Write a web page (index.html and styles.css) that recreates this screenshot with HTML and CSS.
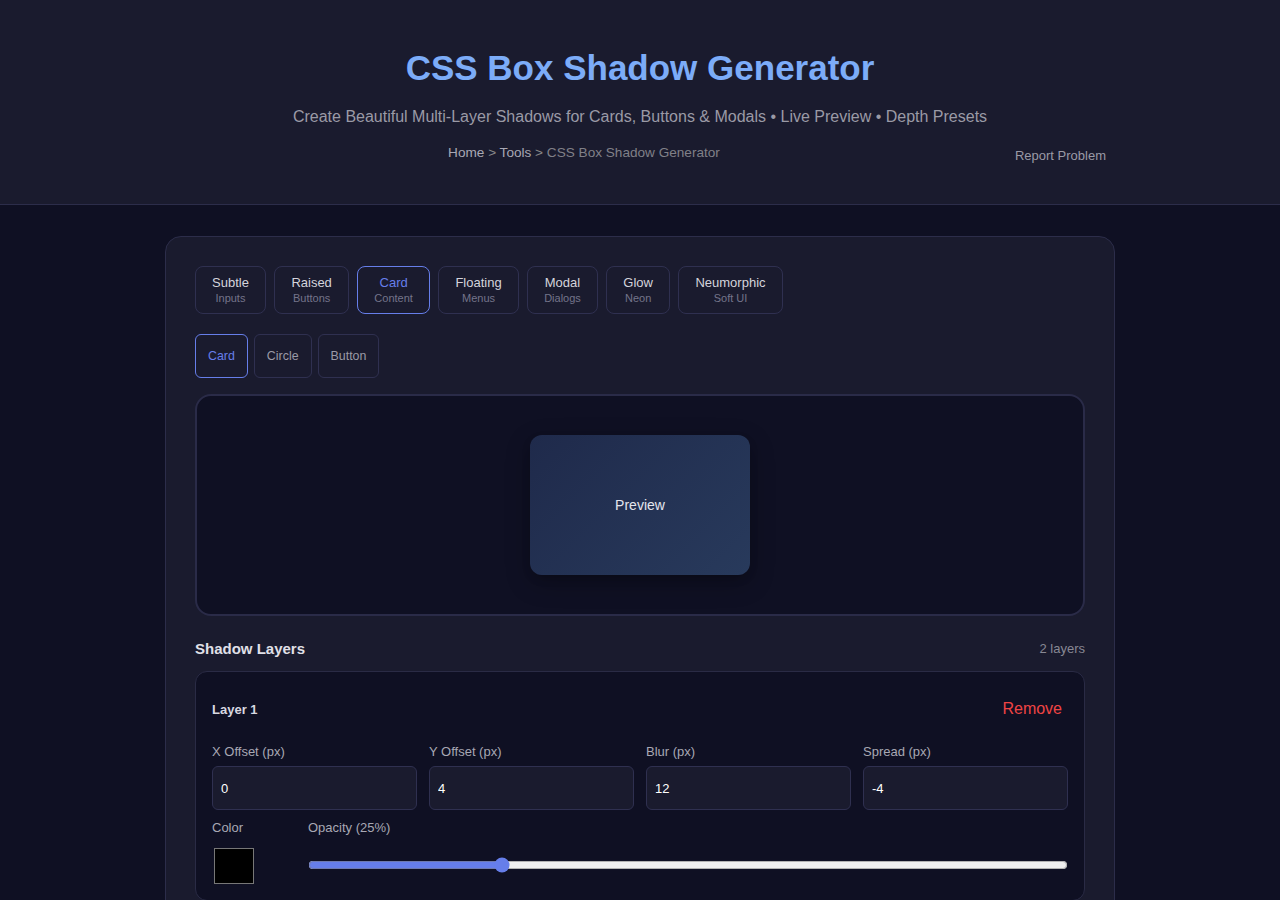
FILE: index.html
```
<html>
  <head>
    <title>CSS Box Shadow Generator</title>
    <link rel="stylesheet" href="styles.css">
  </head>
  <body>
    <div id="header">
      <h1>CSS Box Shadow Generator</h1>
      <p class="subtitle">Create Beautiful Multi-Layer Shadows for Cards, Buttons &amp; Modals • Live Preview • Depth Presets</p>
      <div class="crumbs-row">
        <div class="crumbs"><a href="#">Home</a> &gt; <a href="#">Tools</a> &gt; <span>CSS Box Shadow Generator</span></div>
        <a class="report" href="#">Report Problem</a>
      </div>
    </div>
    <div id="main">
      <div class="panel">
        <div class="presets">
          <div class="preset"><span>Subtle</span><small>Inputs</small></div>
          <div class="preset"><span>Raised</span><small>Buttons</small></div>
          <div class="preset active"><span>Card</span><small>Content</small></div>
          <div class="preset"><span>Floating</span><small>Menus</small></div>
          <div class="preset"><span>Modal</span><small>Dialogs</small></div>
          <div class="preset"><span>Glow</span><small>Neon</small></div>
          <div class="preset"><span>Neumorphic</span><small>Soft UI</small></div>
        </div>
        <div class="shapes">
          <div class="shape active">Card</div>
          <div class="shape">Circle</div>
          <div class="shape">Button</div>
        </div>
        <div class="stage">
          <div class="preview-box">Preview</div>
        </div>
        <div class="layers-head">
          <h2>Shadow Layers</h2>
          <span class="count">2 layers</span>
        </div>
        <div class="layer">
          <div class="layer-head">
            <span class="layer-name">Layer 1</span>
            <span class="remove">Remove</span>
          </div>
          <div class="fields">
            <label>X Offset (px)<input type="text" value="0"></label>
            <label>Y Offset (px)<input type="text" value="4"></label>
            <label>Blur (px)<input type="text" value="12"></label>
            <label>Spread (px)<input type="text" value="-4"></label>
          </div>
          <div class="color-row">
            <div class="color-col">
              <span class="lbl">Color</span>
              <div class="swatch"></div>
            </div>
            <div class="opacity-col">
              <span class="lbl">Opacity (25%)</span>
              <input type="range" min="0" max="100" value="25">
            </div>
          </div>
        </div>
      </div>
    </div>
  </body>
</html>
```
FILE: styles.css
```
body {
  margin: 0;
  background: #0f1023;
  font-family: "Liberation Sans", Arial, sans-serif;
  color: #e0e0e8;
}
#header {
  background: #1a1b2e;
  border-bottom: 1px solid #2c2d4a;
  text-align: center;
  padding: 46px 0 31px;
}
#header h1 {
  margin: 0;
  font-size: 35px;
  line-height: 44px;
  color: #7cacf8;
}
.subtitle {
  margin: 18px 0 0;
  font-size: 16px;
  color: #9a9aa6;
}
.crumbs-row {
  position: relative;
  margin-top: 19px;
  height: 28px;
}
.crumbs {
  font-size: 13.6px;
  color: #888;
  padding-right: 112px;
}
.crumbs a {
  color: #a8a8b4;
  text-decoration: none;
}
.crumbs span {
  color: #808088;
}
.report {
  position: absolute;
  right: 174px;
  top: 3px;
  font-size: 13px;
  color: #9a9aa6;
  text-decoration: none;
}
#main {
  padding: 31px 0 0;
}
.panel {
  width: 890px;
  margin: 0 auto;
  background: #1a1b2e;
  border: 1px solid #2c2d4a;
  border-radius: 16px;
  padding: 29px 29px 20px;
}
.presets {
  display: flex;
  gap: 8.5px;
}
.preset {
  display: flex;
  flex-direction: column;
  align-items: center;
  padding: 8px 16px 8px;
  border: 1px solid #2f3050;
  border-radius: 8px;
  font-size: 13px;
  line-height: 16px;
  color: #d4d4dc;
}
.preset small {
  font-size: 11px;
  line-height: 13px;
  color: #74748a;
  margin-top: 1px;
}
.preset.active {
  border-color: #667eea;
}
.preset.active span {
  color: #667eea;
}
.shapes {
  display: flex;
  gap: 6px;
  margin-top: 20px;
}
.shape {
  padding: 14px 12px;
  border: 1px solid #2f3050;
  border-radius: 6px;
  font-size: 12.4px;
  color: #9a9aa6;
}
.shape.active {
  border-color: #667eea;
  color: #667eea;
}
.stage {
  margin-top: 16px;
  height: 218px;
  background: #0f1023;
  border: 2px solid #2a2b48;
  border-radius: 16px;
  display: flex;
  align-items: center;
  justify-content: center;
}
.preview-box {
  width: 220px;
  height: 140px;
  border-radius: 12px;
  background: linear-gradient(135deg, #1f2a4b, #283a5c);
  box-shadow: 0 4px 12px -4px rgba(0, 0, 0, 0.25), 0 8px 24px rgba(0, 0, 0, 0.25);
  display: flex;
  align-items: center;
  justify-content: center;
  font-size: 14px;
  color: #e4e6ee;
}
.layers-head {
  display: flex;
  justify-content: space-between;
  align-items: center;
  margin-top: 24px;
}
.layers-head h2 {
  margin: 0;
  font-size: 15px;
  color: #e0e0e8;
}
.count {
  font-size: 13px;
  color: #888894;
}
.layer {
  margin-top: 14px;
  background: #0f1023;
  border: 1px solid #2a2b45;
  border-radius: 12px;
  padding: 28px 16px 16px;
}
.layer-head {
  display: flex;
  justify-content: space-between;
  align-items: center;
  padding-right: 6px;
}
.layer-name {
  font-size: 13px;
  font-weight: bold;
  color: #d8d8e0;
}
.remove {
  font-size: 16px;
  color: #ef4444;
}
.fields {
  display: grid;
  grid-template-columns: repeat(4, 1fr);
  gap: 12px;
  margin-top: 26px;
}
.fields label,
.lbl {
  display: block;
  font-size: 13px;
  color: #a8a8b4;
}
.fields input {
  display: block;
  box-sizing: border-box;
  width: 100%;
  height: 44px;
  margin-top: 7px;
  padding: 0 8px;
  background: #1a1b2e;
  border: 1px solid #2f3050;
  border-radius: 6px;
  font-family: "Liberation Sans", Arial, sans-serif;
  font-size: 13px;
  color: #ffffff;
}
.color-row {
  display: flex;
  gap: 54px;
  margin-top: 10px;
}
.swatch {
  width: 38px;
  height: 34px;
  margin: 13px 0 0 2px;
  background: #000;
  border: 1px solid #777;
}
.opacity-col {
  flex: 1;
}
.opacity-col input {
  display: block;
  width: 100%;
  margin: 22px 0 0;
  accent-color: #667eea;
}
```
